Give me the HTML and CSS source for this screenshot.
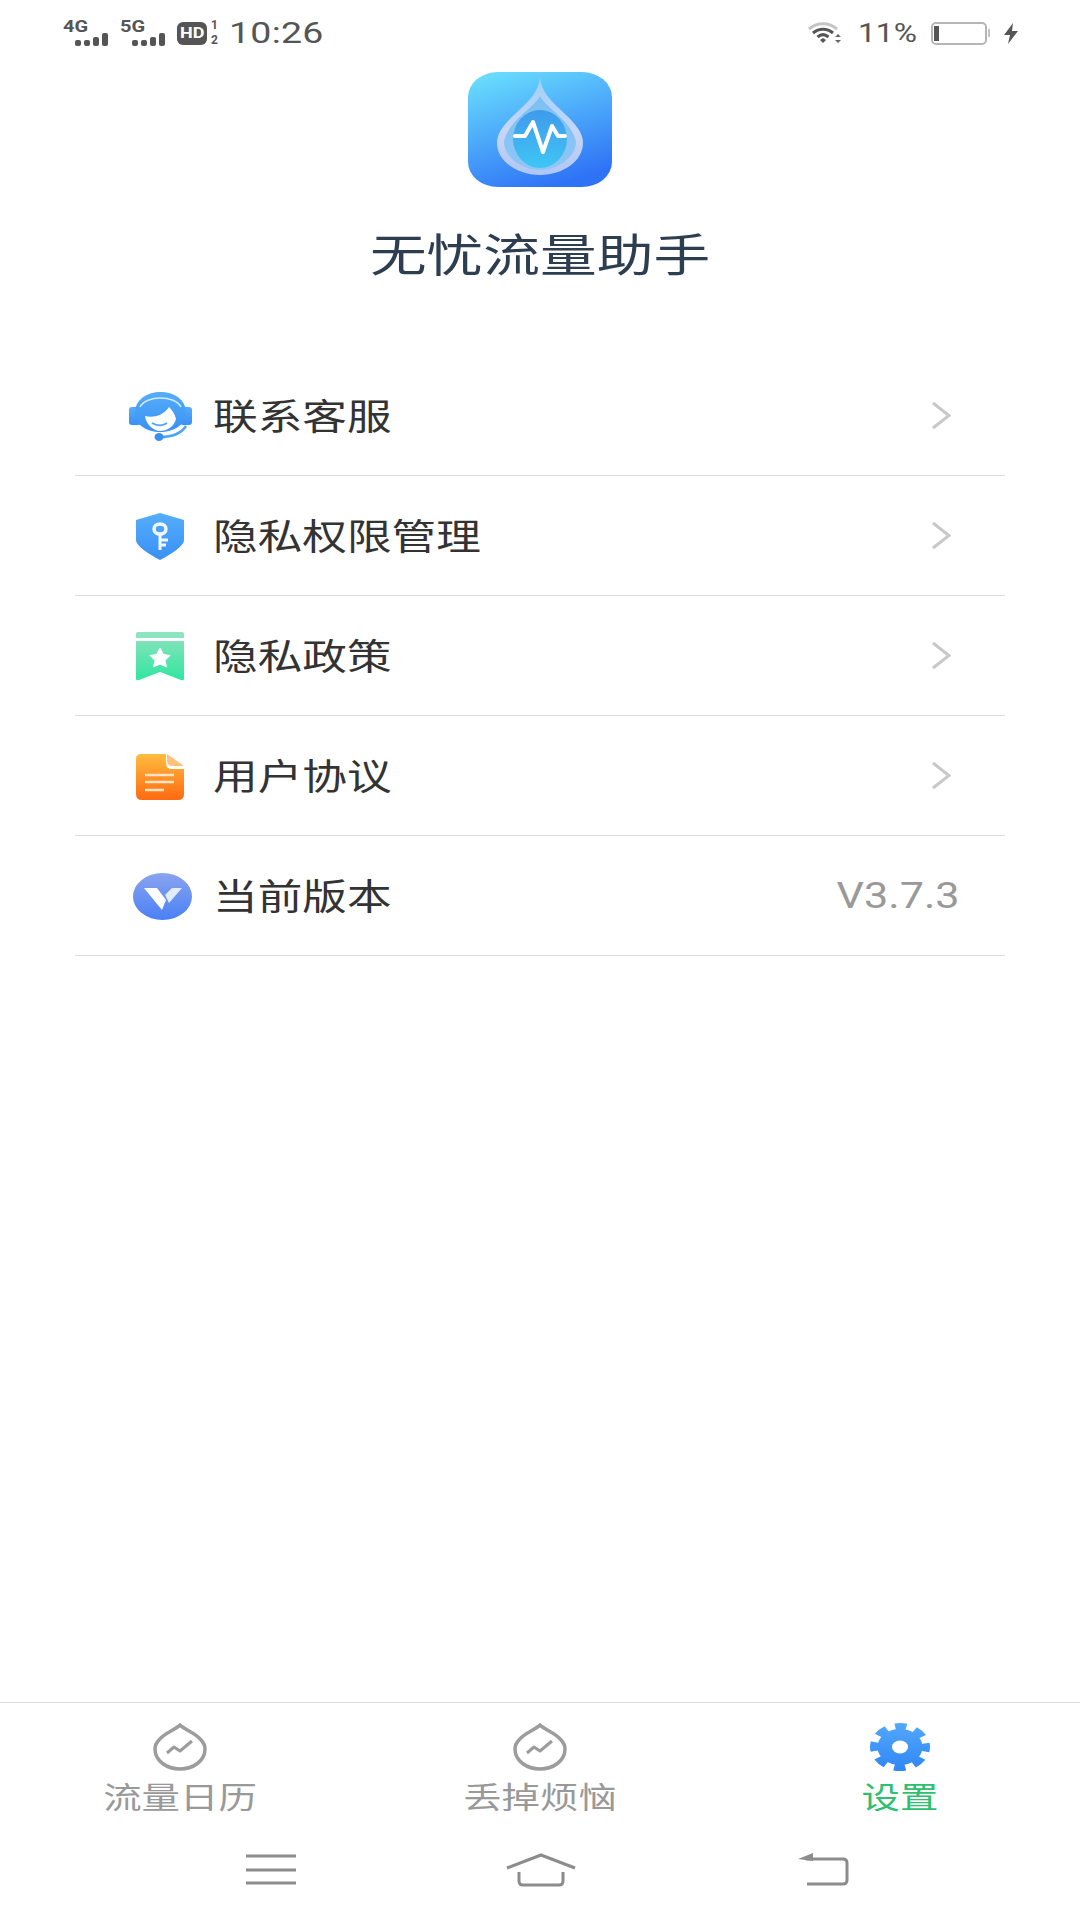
FILE: index.html
```html
<!DOCTYPE html>
<html lang="zh-CN">
<head>
    <meta charset="UTF-8">
    <meta name="viewport" content="width=device-width, initial-scale=1.0">
    <title>无忧流量助手</title>
    <link rel="stylesheet" href="styles.css">
</head>
<body>
    <svg class="defs" width="0" height="0">
        <defs>
            <linearGradient id="logoBg" x1="0.2" y1="0" x2="0.6" y2="1">
                <stop offset="0" stop-color="#68dcfd"/>
                <stop offset="1" stop-color="#2e72f6"/>
            </linearGradient>
            <linearGradient id="dropRim" x1="0" y1="0" x2="0" y2="1">
                <stop offset="0" stop-color="#9fd0fa"/>
                <stop offset="0.55" stop-color="#c6d6f6"/>
                <stop offset="1" stop-color="#b0c6f6"/>
            </linearGradient>
            <linearGradient id="dropBody" x1="0" y1="0" x2="0" y2="1">
                <stop offset="0" stop-color="#7cc0f4"/>
                <stop offset="1" stop-color="#8fc6f4"/>
            </linearGradient>
            <linearGradient id="dropCore" x1="0" y1="0" x2="0" y2="1">
                <stop offset="0" stop-color="#3f9aec"/>
                <stop offset="1" stop-color="#3fc6f5"/>
            </linearGradient>
            <linearGradient id="blueIcon" x1="0" y1="0" x2="0" y2="1">
                <stop offset="0" stop-color="#54aefa"/>
                <stop offset="1" stop-color="#3a8ff5"/>
            </linearGradient>
            <linearGradient id="greenIcon" x1="0" y1="0" x2="0" y2="1">
                <stop offset="0" stop-color="#7fe3b8"/>
                <stop offset="1" stop-color="#2fe6a0"/>
            </linearGradient>
            <linearGradient id="orangeIcon" x1="0" y1="0" x2="0" y2="1">
                <stop offset="0" stop-color="#ffbc3e"/>
                <stop offset="1" stop-color="#ff6a12"/>
            </linearGradient>
            <linearGradient id="violetIcon" x1="0" y1="0" x2="0" y2="1">
                <stop offset="0" stop-color="#8aa4ee"/>
                <stop offset="1" stop-color="#4a80f6"/>
            </linearGradient>
            <linearGradient id="gearFill" gradientUnits="userSpaceOnUse" x1="0" y1="0" x2="0" y2="48">
                <stop offset="0" stop-color="#52a8fb"/>
                <stop offset="1" stop-color="#2f86f5"/>
            </linearGradient>
            <symbol id="chevron" viewBox="0 0 20 29">
                <path d="M2 2L18 14.5L2 27" fill="none" stroke="#c8c8c8" stroke-width="3"/>
            </symbol>
            <symbol id="tabDrop" viewBox="0 0 54 48">
                <path d="M27 2C32 7 43 10 48 17C51 20 52 23 52 26C52 38 40 46 27 46C14 46 2 38 2 26C2 23 3 20 6 17C11 10 22 7 27 2Z" fill="none" stroke="#9c9c9c" stroke-width="3.500"/>
                <path d="M14 30L21 24L27 28L39 18" fill="none" stroke="#9c9c9c" stroke-width="3" stroke-linejoin="round"/>
            </symbol>
        </defs>
    </svg>

    <div class="page">
        <div class="status-bar">
            <div class="status-left">
                <div class="signal">
                    <span class="net">4G</span>
                    <div class="bars"><i class="b1"></i><i class="b1"></i><i class="b2"></i><i class="b3"></i></div>
                </div>
                <div class="signal">
                    <span class="net">5G</span>
                    <div class="bars"><i class="b1"></i><i class="b1"></i><i class="b2"></i><i class="b3"></i></div>
                </div>
                <span class="hd"><span class="hd-text">HD</span></span>
                <div class="sim"><span>1</span><span>2</span></div>
                <span class="clock">10:26</span>
            </div>
            <div class="status-right">
                <svg class="wifi" width="34" height="22" viewBox="0 0 34 22">
                    <path d="M1 7C9 0 21 0 29 7" fill="none" stroke="#c4c4c4" stroke-width="3"/>
                    <path d="M5 11C11 6 19 6 25 11" fill="none" stroke="#555" stroke-width="3"/>
                    <path d="M9.500 15C13 12 17 12 20.500 15" fill="none" stroke="#555" stroke-width="3"/>
                    <path d="M12 18L15 16L18 18L15 21Z" fill="#555"/>
                    <path d="M30 12L33 15H27ZM30 21L27 18H33Z" fill="#666"/>
                </svg>
                <span class="battery-pct">11%</span>
                <div class="battery"><i class="battery-fill"></i></div>
                <i class="battery-tip"></i>
                <svg class="bolt" width="14" height="21" viewBox="0 0 14 21">
                    <path d="M9 0L0 12H6L4 21L14 8H8Z" fill="#555"/>
                </svg>
            </div>
        </div>

        <div class="header">
            <svg class="logo" width="144" height="115" viewBox="0 0 144 115">
                <rect width="144" height="115" rx="30" ry="25" fill="url(#logoBg)"/>
                <path d="M72 5C73 20 84 30 97 42C109 53 115 62 115 71C115 89 95 103 72 103C49 103 29 89 29 71C29 62 35 53 47 42C60 30 71 20 72 5Z" fill="url(#dropRim)"/>
                <path d="M72 24C76 34 105 50 108 70C108 85 90 98 72 98C54 98 36 85 36 70C39 50 68 34 72 24Z" fill="url(#dropBody)"/>
                <ellipse cx="72" cy="67" rx="27" ry="29" fill="url(#dropCore)"/>
                <path d="M47 64H57L65 50L75 80L84 54L90 64H97" fill="none" stroke="#fff" stroke-width="4" stroke-linejoin="round" stroke-linecap="round"/>
            </svg>
            <h1 class="app-name">无忧流量助手</h1>
        </div>

        <div class="menu">
            <div class="menu-row">
                <div class="menu-icon">
                    <svg width="63" height="51" viewBox="0 0 63 51">
                        <rect x="0" y="16" width="12" height="18" rx="3" fill="url(#blueIcon)"/>
                        <rect x="51" y="16" width="12" height="18" rx="3" fill="url(#blueIcon)"/>
                        <path d="M6 22C6 -6 57 -6 57 22C57 34 44 41 31 41C18 41 6 34 6 22Z" fill="url(#blueIcon)"/>
                        <path d="M11 16C17 4 46 4 52 16" fill="none" stroke="#d4eafe" stroke-width="1.500"/>
                        <path d="M16 25C24 27 34 25 40 16C43 19 46 23 47 28C45 36 38 40 31 40C24 40 17 33 16 25Z" fill="#fff"/>
                        <path d="M23 32C28 35 34 35 38 32" fill="none" stroke="#4aa5f8" stroke-width="2"/>
                        <path d="M31 46C42 46 52 43 57 35" fill="none" stroke="#4aa5f8" stroke-width="2.500"/>
                        <ellipse cx="30" cy="46" rx="4.500" ry="4" fill="#3a8ff5"/>
                    </svg>
                </div>
                <span class="menu-label">联系客服</span>
                <svg class="chevron"><use href="#chevron"/></svg>
            </div>
            <div class="menu-row">
                <div class="menu-icon">
                    <svg width="48" height="47" viewBox="0 0 48 47">
                        <path d="M24 0L48 7V27C48 33 34 42 24 47C14 42 0 33 0 27V7Z" fill="url(#blueIcon)"/>
                        <ellipse cx="24" cy="16" rx="6" ry="5" fill="none" stroke="#f2f8ff" stroke-width="3.500"/>
                        <path d="M24 21V37M24 27H32M24 32H30" fill="none" stroke="#f2f8ff" stroke-width="3"/>
                    </svg>
                </div>
                <span class="menu-label">隐私权限管理</span>
                <svg class="chevron"><use href="#chevron"/></svg>
            </div>
            <div class="menu-row">
                <div class="menu-icon">
                    <svg width="48" height="49" viewBox="0 0 48 49">
                        <path d="M0 2Q0 0 2 0H46Q48 0 48 2V6H0Z" fill="#8ce4c0"/>
                        <path d="M0 9H48V47Q48 49 45 48L24 40L3 48Q0 49 0 47Z" fill="url(#greenIcon)"/>
                        <path d="M24 16L27.500 22.500L34 23.500L29 28.500L30.500 35L24 32L17.500 35L19 28.500L14 23.500L20.500 22.500Z" fill="#fff" stroke="#fff" stroke-linejoin="round"/>
                    </svg>
                </div>
                <span class="menu-label">隐私政策</span>
                <svg class="chevron"><use href="#chevron"/></svg>
            </div>
            <div class="menu-row">
                <div class="menu-icon">
                    <svg width="48" height="46" viewBox="0 0 48 46">
                        <path d="M5 0H30V9Q30 15 36 15H48V40Q48 46 42 46H6Q0 46 0 40V5Q0 0 5 0Z" fill="url(#orangeIcon)"/>
                        <path d="M31 0L48 12H37Q31 12 31 7Z" fill="#ffc27a"/>
                        <path d="M9 21H38M9 28H38M9 36H28" fill="none" stroke="#ffe3c4" stroke-width="2.500"/>
                    </svg>
                </div>
                <span class="menu-label">用户协议</span>
                <svg class="chevron"><use href="#chevron"/></svg>
            </div>
            <div class="menu-row">
                <div class="menu-icon">
                    <svg class="icon-version" width="59" height="47" viewBox="0 0 59 47">
                        <ellipse cx="29.500" cy="23.500" rx="29.500" ry="23.500" fill="url(#violetIcon)"/>
                        <path d="M11 15H24L33 27L29 37Z" fill="#fff"/>
                        <path d="M32 22L39 15H49L36 30Z" fill="#e4ecfc"/>
                    </svg>
                </div>
                <span class="menu-label">当前版本</span>
                <span class="version">V3.7.3</span>
            </div>
        </div>

        <div class="tab-bar">
            <div class="tab">
                <svg class="tab-icon"><use href="#tabDrop"/></svg>
                <span class="tab-label">流量日历</span>
            </div>
            <div class="tab">
                <svg class="tab-icon"><use href="#tabDrop"/></svg>
                <span class="tab-label">丢掉烦恼</span>
            </div>
            <div class="tab active">
                <svg class="tab-icon" viewBox="0 0 48 48" preserveAspectRatio="none">
                    <circle cx="24" cy="24" r="18" fill="url(#gearFill)"/>
                    <circle cx="24" cy="24" r="20.500" fill="none" stroke="url(#gearFill)" stroke-width="7" stroke-dasharray="9.100 7" stroke-dashoffset="4.550"/>
                    <circle cx="24" cy="24" r="6.500" fill="#fff"/>
                </svg>
                <span class="tab-label">设置</span>
            </div>
        </div>

        <div class="nav-bar">
            <svg width="50" height="34" viewBox="0 0 50 34">
                <path d="M0 3H50M0 17H50M0 30H50" fill="none" stroke="#8c8c8c" stroke-width="3"/>
            </svg>
            <svg width="70" height="34" viewBox="0 0 70 34">
                <path d="M1 15L35 2L69 15" fill="none" stroke="#8c8c8c" stroke-width="3" stroke-linejoin="round"/>
                <path d="M13 19V28Q13 32 17 32H53Q57 32 57 28V19" fill="none" stroke="#8c8c8c" stroke-width="3"/>
            </svg>
            <svg class="nav-back" width="51" height="34" viewBox="0 0 51 34">
                <path d="M0 6L15 0V8Z" fill="#8c8c8c"/>
                <path d="M8 6H45Q49 6 49 10V27Q49 31 45 31H9" fill="none" stroke="#8c8c8c" stroke-width="3"/>
            </svg>
        </div>
    </div>
</body>
</html>
```

FILE: styles.css
```css
body { margin: 0; padding: 0; background: #fff; font-family: "Noto Sans CJK SC", Roboto, sans-serif; }
.defs { position: absolute; }
.page { width: 1080px; height: 1920px; display: flex; flex-direction: column; overflow: hidden; }

/* status bar */
.status-bar { height: 66px; padding: 0 62px 0 63px; display: flex; justify-content: space-between; align-items: center; color: #555; font-family: Roboto, sans-serif; }
.status-left, .status-right { display: flex; align-items: center; }
.signal { width: 47px; margin-right: 10px; display: flex; flex-direction: column; }
.net { align-self: flex-start; font-size: 16px; font-weight: 700; line-height: 11px; transform: scaleX(1.25); transform-origin: left; }
.bars { display: flex; align-items: flex-end; gap: 3px; margin-left: 12px; height: 14px; }
.bars i { width: 6px; background: #555; border-radius: 2px; }
.bars .b1 { height: 6px; }
.bars .b2 { height: 9px; }
.bars .b3 { height: 13px; }
.hd { width: 30px; height: 23px; margin-top: 1px; background: #555; border-radius: 6px; display: flex; justify-content: center; align-items: center; }
.hd-text { color: #fff; font-size: 15px; font-weight: 700; line-height: 23px; transform: scaleX(1.2); }
.sim { width: 13px; margin-left: 1px; display: flex; flex-direction: column; align-items: center; font-size: 12px; font-weight: 700; line-height: 15px; }
.clock { margin-left: 8px; font-size: 30px; line-height: 36px; transform: scaleX(1.25); transform-origin: left; width: 75px; letter-spacing: 0.2px; }
.status-right .wifi { margin-right: 16px; }
.battery-pct { width: 47px; margin-right: 26px; font-size: 26px; line-height: 30px; transform: scaleX(1.22); transform-origin: left; }
.battery { width: 56px; height: 23px; box-sizing: border-box; border: 2px solid #b5b5b5; border-radius: 5px; padding: 2px 1px; }
.battery-fill { display: block; width: 5px; height: 100%; background: #555; }
.battery-tip { width: 2px; height: 8px; margin: 0 14px 0 1px; background: #c4c4c4; }

/* header */
.header { display: flex; flex-direction: column; align-items: center; margin-top: 6px; }
.logo { display: block; }
.app-name { margin: 41px 0 78px; font-size: 45px; font-weight: 400; line-height: 50px; color: #2c3e50; transform: scaleX(1.26); }

/* menu list */
.menu { margin: 0 75px; }
.menu-row { height: 119px; border-bottom: 1px solid #ddd; display: flex; align-items: center; padding: 0 45px 0 50px; }
.menu-icon { width: 70px; margin: 2px 18px 0 0; display: flex; justify-content: center; }
.menu-icon svg { display: block; }
.icon-version { margin-left: 4px; }
.menu-label { margin-bottom: 4px; font-size: 36px; line-height: 48px; color: #333; transform: scaleX(1.24); transform-origin: left; }
.chevron { width: 20px; height: 29px; margin-left: auto; margin-right: 9px; }
.version { margin-left: auto; font-family: Roboto, sans-serif; font-size: 36px; line-height: 48px; color: #999; transform: scaleX(1.2); transform-origin: right; }

/* bottom tabs */
.tab-bar { margin-top: auto; border-top: 1px solid #ddd; padding-top: 20px; display: flex; }
.tab { flex: 1; display: flex; flex-direction: column; align-items: center; }
.tab-icon { width: 54px; height: 48px; display: block; }
.tab.active .tab-icon { width: 60px; }
.tab-label { margin: 4px 0 2px; font-size: 30px; line-height: 40px; color: #999; transform: scaleX(1.28); }
.tab.active .tab-label { color: #2fbf71; }

/* system nav */
.nav-bar { height: 67px; padding: 36px 0 0 246px; display: flex; align-items: flex-start; gap: 210px; }
.nav-back { margin-left: 12px; }
```
